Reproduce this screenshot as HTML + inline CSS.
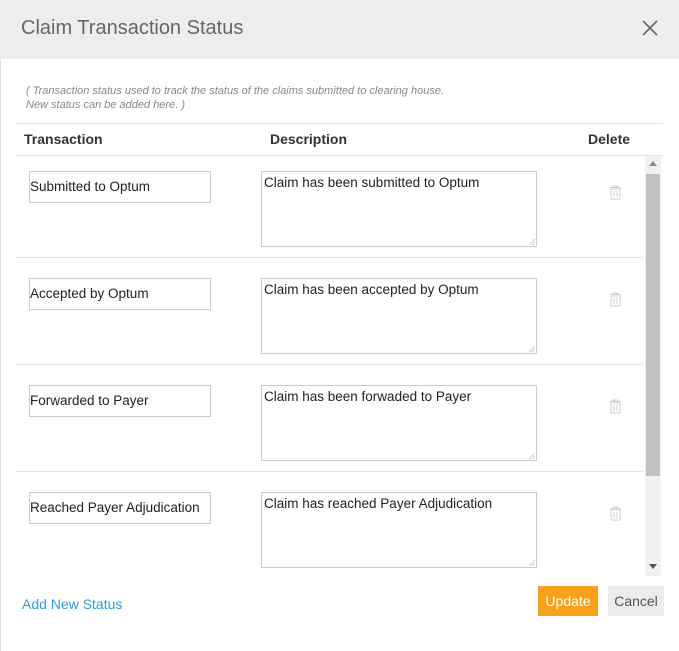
<!DOCTYPE html>
<html><head><style>
body{margin:0;width:679px;height:651px;background:#fff;font-family:"Liberation Sans",sans-serif;position:relative;overflow:hidden;color:#333}
.hdr{position:absolute;left:0;top:0;width:679px;height:59px;background:#ededed}
.hdr .t{position:absolute;left:21px;top:17px;font-size:20px;color:#666}
.hdr .x{position:absolute;left:640px;top:18px}
.lb{position:absolute;left:0;top:59px;width:1px;height:592px;background:#ddd}
.note{position:absolute;left:26px;top:84px;font-size:11px;font-style:italic;color:#888;line-height:14px}
.line{position:absolute;left:16px;width:647px;height:1px;background:#e3e3e3}
.th{position:absolute;top:131px;font-size:14px;font-weight:bold;color:#333}
.in{position:absolute;left:29px;width:182px;height:32px;border:1px solid #ccc;font-size:13.5px;line-height:30px;padding-left:0;box-sizing:border-box;color:#222}
.ta{position:absolute;left:261px;width:276px;height:76px;border:1px solid #ccc;box-sizing:border-box;font-size:13.5px;padding:3px 2px;color:#222}
.ta:after{content:"";position:absolute;right:1px;bottom:1px;width:6px;height:6px;background:linear-gradient(135deg,transparent 45%,#999 50%,transparent 55%,transparent 70%,#999 75%,transparent 80%)}
.tr{position:absolute;left:609px}
.sb{position:absolute;left:645px;top:156px;width:16px;height:420px;background:#f1f1f1}
.thumb{position:absolute;left:646px;top:174px;width:14px;height:302px;background:#c1c1c1}
.btn{position:absolute;top:586px;height:30px;font-size:14px;line-height:30px;text-align:center}
</style></head><body>
<div class="hdr"><div class="t">Claim Transaction Status</div>
<svg class="x" width="20" height="20" viewBox="0 0 20 20"><path d="M3 3L17 17M17 3L3 17" stroke="#666" stroke-width="1.6"/></svg></div>
<div class="lb"></div>
<div class="note">( Transaction status used to track the status of the claims submitted to clearing house.<br>New status can be added here. )</div>
<div class="line" style="top:123px"></div>
<div class="th" style="left:24px">Transaction</div>
<div class="th" style="left:270px">Description</div>
<div class="th" style="left:588px">Delete</div>
<div class="line" style="top:155px"></div>
<div class="sb"></div><div class="thumb"></div>
<svg style="position:absolute;left:649px;top:161px" width="8" height="5"><path d="M0 5L4 0L8 5Z" fill="#888"/></svg>
<svg style="position:absolute;left:649px;top:564px" width="8" height="5"><path d="M0 0L4 5L8 0Z" fill="#555"/></svg>

<div class="in" style="top:171px">Submitted to Optum</div>
<div class="ta" style="top:171px">Claim has been submitted to Optum</div>
<div class="line" style="top:257px;width:627px"></div>
<div class="in" style="top:278px">Accepted by Optum</div>
<div class="ta" style="top:278px">Claim has been accepted by Optum</div>
<div class="line" style="top:364px;width:627px"></div>
<div class="in" style="top:385px">Forwarded to Payer</div>
<div class="ta" style="top:385px">Claim has been forwaded to Payer</div>
<div class="line" style="top:471px;width:627px"></div>
<div class="in" style="top:492px">Reached Payer Adjudication</div>
<div class="ta" style="top:492px">Claim has reached Payer Adjudication</div>

<svg class="tr" style="top:185px" width="13" height="15" viewBox="0 0 13 15"><path d="M1 2.5H12M4.5 2.5V1H8.5V2.5M2 4H11V14H2Z M5 6V12M8 6V12" fill="none" stroke="#ccc" stroke-width="1"/></svg>
<svg class="tr" style="top:292px" width="13" height="15" viewBox="0 0 13 15"><path d="M1 2.5H12M4.5 2.5V1H8.5V2.5M2 4H11V14H2Z M5 6V12M8 6V12" fill="none" stroke="#ccc" stroke-width="1"/></svg>
<svg class="tr" style="top:399px" width="13" height="15" viewBox="0 0 13 15"><path d="M1 2.5H12M4.5 2.5V1H8.5V2.5M2 4H11V14H2Z M5 6V12M8 6V12" fill="none" stroke="#ccc" stroke-width="1"/></svg>
<svg class="tr" style="top:506px" width="13" height="15" viewBox="0 0 13 15"><path d="M1 2.5H12M4.5 2.5V1H8.5V2.5M2 4H11V14H2Z M5 6V12M8 6V12" fill="none" stroke="#ccc" stroke-width="1"/></svg>

<div style="position:absolute;left:22px;top:596px;font-size:14px;color:#2a9fd8">Add New Status</div>
<div class="btn" style="left:538px;width:60px;background:#f9a11b;color:#fff">Update</div>
<div class="btn" style="left:608px;width:56px;background:#ececec;color:#555">Cancel</div>
</body></html>
